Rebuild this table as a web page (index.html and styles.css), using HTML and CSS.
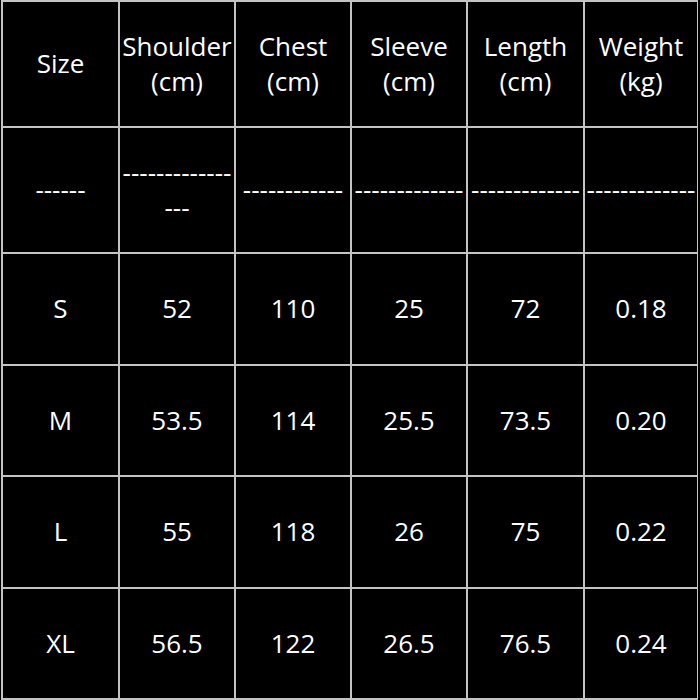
FILE: index.html
```html
<!DOCTYPE html>
<html lang="en">
<head>
<meta charset="utf-8">
<title>Size chart</title>
<link rel="stylesheet" href="styles.css">
</head>
<body>
<div class="chart">
  <div class="cell">Size</div>
  <div class="cell">Shoulder<br>(cm)</div>
  <div class="cell">Chest<br>(cm)</div>
  <div class="cell">Sleeve<br>(cm)</div>
  <div class="cell">Length<br>(cm)</div>
  <div class="cell">Weight<br>(kg)</div>

  <div class="cell dash">------</div>
  <div class="cell dash">----------------</div>
  <div class="cell dash">------------</div>
  <div class="cell dash">-------------</div>
  <div class="cell dash">-------------</div>
  <div class="cell dash">-------------</div>

  <div class="cell">S</div>
  <div class="cell">52</div>
  <div class="cell">110</div>
  <div class="cell">25</div>
  <div class="cell">72</div>
  <div class="cell">0.18</div>

  <div class="cell">M</div>
  <div class="cell">53.5</div>
  <div class="cell">114</div>
  <div class="cell">25.5</div>
  <div class="cell">73.5</div>
  <div class="cell">0.20</div>

  <div class="cell">L</div>
  <div class="cell">55</div>
  <div class="cell">118</div>
  <div class="cell">26</div>
  <div class="cell">75</div>
  <div class="cell">0.22</div>

  <div class="cell">XL</div>
  <div class="cell">56.5</div>
  <div class="cell">122</div>
  <div class="cell">26.5</div>
  <div class="cell">76.5</div>
  <div class="cell">0.24</div>
</div>
</body>
</html>
```

FILE: styles.css
```css
html, body {
  margin: 0;
  padding: 0;
  background: #000;
}

body {
  width: 700px;
  height: 700px;
  overflow: hidden;
}

.chart {
  margin-left: 1px;
  width: 697px;
  box-sizing: border-box;
  display: grid;
  grid-template-columns: 115px 114px 114px 114px 115px 112px;
  grid-template-rows: 124px 124px 110px 109px 110px 109px;
  gap: 2px;
  padding: 2px;
  background: #c4c4c4;
  font-family: "Open Sans", "DejaVu Sans", sans-serif;
  font-size: 26px;
  line-height: 1.362;
  color: #fff;
}

.cell {
  background: #000;
  display: flex;
  align-items: center;
  justify-content: center;
  text-align: center;
  overflow: hidden;
}

.dash {
  overflow-wrap: anywhere;
  word-break: break-all;
  padding: 0 1px;
}
```
